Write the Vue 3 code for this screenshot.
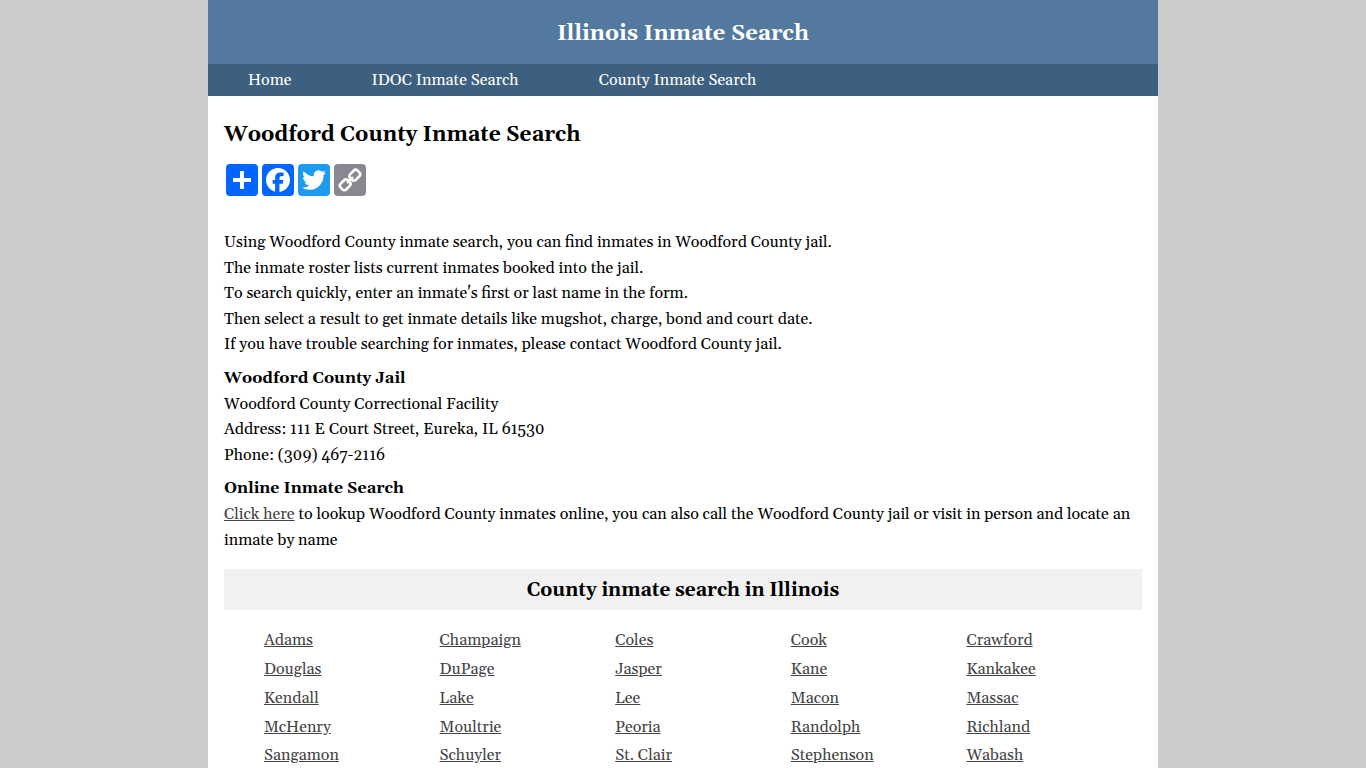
<template>
  <div class="wrapper">
    <header class="header">
      <div class="site-title">Illinois Inmate Search</div>
    </header>
    <nav class="nav">
      <a v-for="item in menu" :key="item" href="#">{{ item }}</a>
    </nav>
    <main class="content">
      <h1>Woodford County Inmate Search</h1>
      <div class="share">
        <a v-for="item in share" :key="item.name" href="#" :class="item.name" :aria-label="item.label">
          <svg viewBox="0 0 32 32" aria-hidden="true">
            <path v-if="item.path" fill="#fff" :d="item.path" />
            <g v-else fill="none" stroke="#fff" stroke-width="2.6" transform="rotate(-45 16 16)">
              <rect x="4" y="12" width="10.4" height="8" rx="2.8" />
              <rect x="17.6" y="12" width="10.4" height="8" rx="2.8" />
              <path d="M12.6 16h6.8" stroke-width="2.2" stroke-linecap="round" />
            </g>
          </svg>
        </a>
      </div>
      <p>
        <template v-for="(line, index) in intro" :key="index">{{ line }}<br></template>
      </p>
      <p>
        <b>Woodford County Jail</b><br>
        Woodford County Correctional Facility<br>
        Address: 111 E Court Street, Eureka, IL 61530<br>
        Phone: (309) 467-2116
      </p>
      <p>
        <b>Online Inmate Search</b><br>
        <a href="#">Click here</a> to lookup Woodford County inmates online, you can also call the Woodford County jail or visit in person and locate an inmate by name
      </p>
      <h2>County inmate search in Illinois</h2>
      <ul class="counties">
        <li v-for="county in counties" :key="county"><a href="#">{{ county }}</a></li>
      </ul>
    </main>
  </div>
</template>

<script setup>
const menu = ['Home', 'IDOC Inmate Search', 'County Inmate Search']

const share = [
  { name: 'more', label: 'Share', path: 'M14 7h4v7h7v4h-7v7h-4v-7H7v-4h7z' },
  {
    name: 'facebook',
    label: 'Facebook',
    path: 'M28 16c0-6.627-5.373-12-12-12S4 9.373 4 16c0 5.628 3.875 10.35 9.101 11.647v-7.98h-2.474V16H13.1v-1.58c0-4.085 1.849-5.978 5.859-5.978.76 0 2.072.15 2.608.298v3.325c-.283-.03-.775-.045-1.386-.045-1.967 0-2.728.745-2.728 2.683V16h3.92l-.673 3.667h-3.247v8.245C23.395 27.195 28 22.135 28 16'
  },
  {
    name: 'twitter',
    label: 'Twitter',
    path: 'M28 8.557a10 10 0 0 1-2.828.775 4.93 4.93 0 0 0 2.166-2.725 9.7 9.7 0 0 1-3.13 1.194 4.92 4.92 0 0 0-3.593-1.55 4.924 4.924 0 0 0-4.794 6.049c-4.09-.21-7.72-2.17-10.15-5.15a4.94 4.94 0 0 0-.665 2.477c0 1.71.87 3.214 2.19 4.1a5 5 0 0 1-2.23-.616v.06c0 2.39 1.7 4.38 3.952 4.83-.414.115-.85.174-1.297.174q-.476-.001-.928-.086a4.935 4.935 0 0 0 4.6 3.42 9.9 9.9 0 0 1-6.114 2.107q-.597 0-1.175-.068a13.95 13.95 0 0 0 7.55 2.213c9.056 0 14.01-7.507 14.01-14.013q0-.32-.015-.637c.96-.695 1.795-1.56 2.455-2.55z'
  },
  { name: 'link', label: 'Copy Link' }
]

const intro = [
  'Using Woodford County inmate search, you can find inmates in Woodford County jail.',
  'The inmate roster lists current inmates booked into the jail.',
  "To search quickly, enter an inmate's first or last name in the form.",
  'Then select a result to get inmate details like mugshot, charge, bond and court date.',
  'If you have trouble searching for inmates, please contact Woodford County jail.'
]

const counties = [
  'Adams', 'Champaign', 'Coles', 'Cook', 'Crawford',
  'Douglas', 'DuPage', 'Jasper', 'Kane', 'Kankakee',
  'Kendall', 'Lake', 'Lee', 'Macon', 'Massac',
  'McHenry', 'Moultrie', 'Peoria', 'Randolph', 'Richland',
  'Sangamon', 'Schuyler', 'St. Clair', 'Stephenson', 'Wabash'
]
</script>

<style>
body {
  margin: 0;
  background: #ccc;
}
</style>

<style scoped>
.wrapper {
  max-width: 950px;
  margin: 0 auto;
  background: #fff;
  color: #000;
  font: 16px/1.6 Georgia, Gelasio, "Liberation Serif", serif;
}

a {
  color: #444;
}

.header {
  padding: 18px 16px 14px;
  background: #53799f;
  color: #fff;
  text-align: center;
}

.site-title {
  font-size: 22px;
  font-weight: bold;
  line-height: 32px;
}

.nav {
  display: flex;
  flex-wrap: wrap;
  background: #3d5f80;
}

.nav a {
  padding: 0 40px;
  color: #fff;
  line-height: 32px;
  text-decoration: none;
}

.content {
  padding: 22px 16px 0;
}

h1 {
  margin: 0;
  font-size: 21px;
  line-height: 34px;
}

.share {
  display: flex;
  gap: 4px;
  padding: 12px 2px 34px;
}

.share a {
  width: 32px;
  height: 32px;
  border-radius: 4px;
}

.share svg {
  display: block;
}

.more,
.facebook {
  background: #0166ff;
}

.twitter {
  background: #1d9bf0;
}

.link {
  background: #888990;
}

p {
  margin: 0 0 8px;
}

h2 {
  margin: 16px 0;
  padding: 5px 4px 3px;
  background: #f1f1f1;
  font-size: 19px;
  line-height: 33px;
  text-align: center;
}

.counties {
  display: grid;
  grid-template-columns: repeat(5, 1fr);
  margin: 0;
  padding: 0 0 0 40px;
  line-height: 1.8;
  list-style: none;
}
</style>
